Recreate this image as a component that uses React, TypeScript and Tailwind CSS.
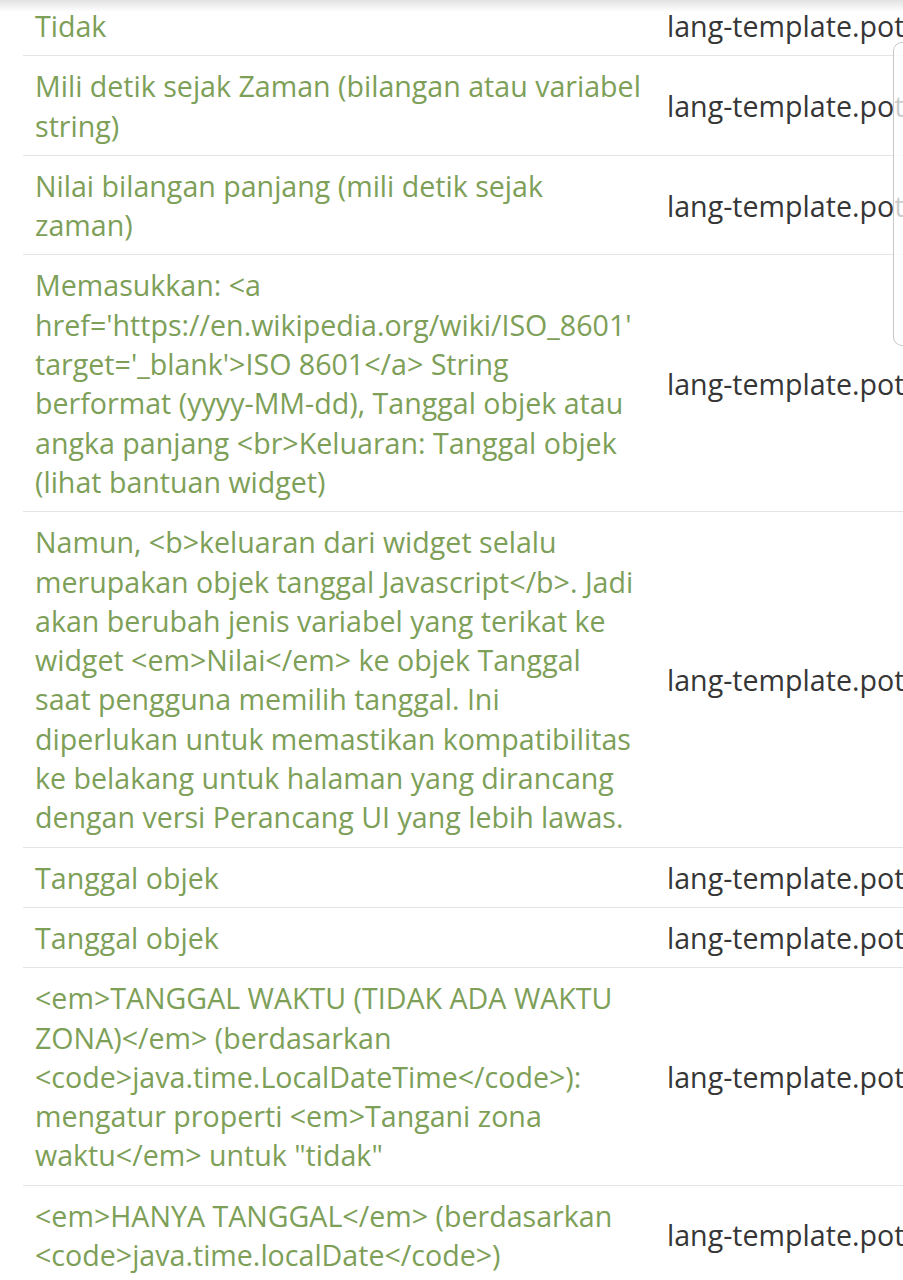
import React from 'react';

interface Row {
  text: React.ReactNode;
  file: string;
}

const rows: Row[] = [
  { text: 'Tidak', file: 'lang-template.pot' },
  { text: 'Mili detik sejak Zaman (bilangan atau variabel string)', file: 'lang-template.pot' },
  {
    text: (
      <>
        Nilai bilangan panjang (mili detik sejak
        <br />
        zaman)
      </>
    ),
    file: 'lang-template.pot',
  },
  {
    text: "Memasukkan: <a href='https://en.wikipedia.org/wiki/ISO_8601' target='_blank'>ISO 8601</a> String berformat (yyyy-MM-dd), Tanggal objek atau angka panjang <br>Keluaran: Tanggal objek (lihat bantuan widget)",
    file: 'lang-template.pot',
  },
  {
    text: 'Namun, <b>keluaran dari widget selalu merupakan objek tanggal Javascript</b>. Jadi akan berubah jenis variabel yang terikat ke widget <em>Nilai</em> ke objek Tanggal saat pengguna memilih tanggal. Ini diperlukan untuk memastikan kompatibilitas ke belakang untuk halaman yang dirancang dengan versi Perancang UI yang lebih lawas.',
    file: 'lang-template.pot',
  },
  { text: 'Tanggal objek', file: 'lang-template.pot' },
  { text: 'Tanggal objek', file: 'lang-template.pot' },
  {
    text: '<em>TANGGAL WAKTU (TIDAK ADA WAKTU ZONA)</em> (berdasarkan <code>java.time.LocalDateTime</code>): mengatur properti <em>Tangani zona waktu</em> untuk "tidak"',
    file: 'lang-template.pot',
  },
  {
    text: '<em>HANYA TANGGAL</em> (berdasarkan <code>java.time.localDate</code>)',
    file: 'lang-template.pot',
  },
];

const App: React.FC = () => {
  return (
    <div
      className="relative w-[903px] h-[1280px] overflow-hidden bg-white"
      style={{ fontFamily: '"Open Sans", "Noto Sans", sans-serif' }}
    >
      <div className="pl-[23px] -mt-[4px]">
        <table className="table-fixed border-collapse w-[1000px] text-[28.6px] leading-[39.3px]">
          <colgroup>
            <col className="w-[632px]" />
            <col className="w-[368px]" />
          </colgroup>
          <tbody>
            {rows.map((r, i) => (
              <tr key={i} className={i > 0 ? 'border-t border-[#e4e4e4]' : ''}>
                <td className="align-top px-3 py-2.5 text-[#7d9f58] break-words">{r.text}</td>
                <td className="align-middle px-3 py-2.5 text-[#363636] whitespace-nowrap">{r.file}</td>
              </tr>
            ))}
          </tbody>
        </table>
      </div>

      {/* top edge shadow */}
      <div className="absolute top-0 left-0 right-0 h-[12px] bg-gradient-to-b from-[#e2e2e2] to-transparent" />

      {/* scroll handle overlay */}
      <div className="absolute left-[893px] top-[42px] w-[24px] h-[304px] rounded-[9px] border border-[#c8c8c8] bg-white/75" />
    </div>
  );
};

export default App;
